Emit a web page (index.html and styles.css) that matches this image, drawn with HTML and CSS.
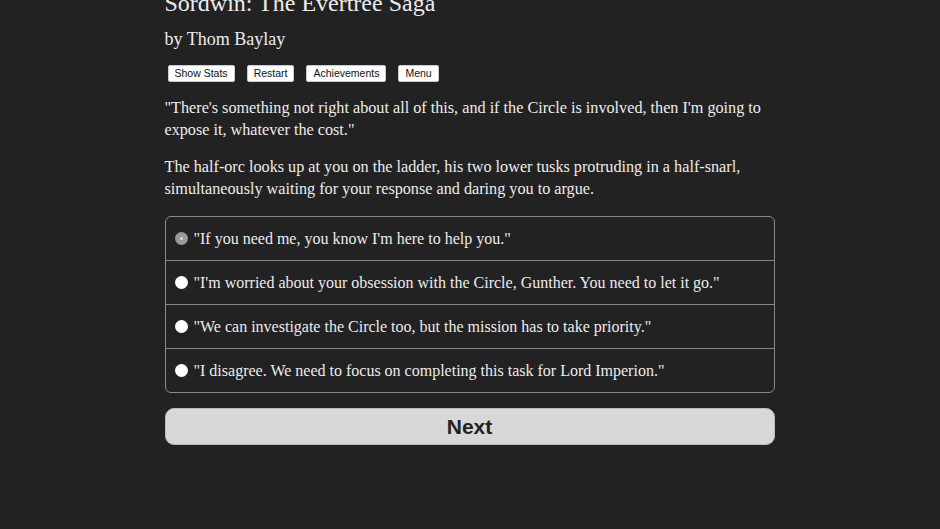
FILE: index.html
```html
<!DOCTYPE html>
<html>
<head>
<meta charset="utf-8">
<link rel="stylesheet" href="styles.css">
</head>
<body>
<div class="page">
  <h1 class="title">Sordwin: The Evertree Saga</h1>
  <h2 class="author">by Thom Baylay</h2>
  <div class="toolbar">
    <button class="tool">Show Stats</button>
    <button class="tool">Restart</button>
    <button class="tool">Achievements</button>
    <button class="tool">Menu</button>
  </div>
  <p class="text">"There's something not right about all of this, and if the Circle is involved, then I'm going to expose it, whatever the cost."</p>
  <p class="text">The half-orc looks up at you on the ladder, his two lower tusks protruding in a half-snarl, simultaneously waiting for your response and daring you to argue.</p>
  <div class="choices">
    <label class="choice"><span class="radio selected"></span><span>"If you need me, you know I'm here to help you."</span></label>
    <label class="choice"><span class="radio"></span><span>"I'm worried about your obsession with the Circle, Gunther. You need to let it go."</span></label>
    <label class="choice"><span class="radio"></span><span>"We can investigate the Circle too, but the mission has to take priority."</span></label>
    <label class="choice"><span class="radio"></span><span>"I disagree. We need to focus on completing this task for Lord Imperion."</span></label>
  </div>
  <button class="next">Next</button>
</div>
</body>
</html>
```
FILE: styles.css
```css
html, body {
  margin: 0;
  padding: 0;
  background: #222222;
  color: #ececec;
  font-family: "Liberation Serif", serif;
}
.page {
  width: 610px;
  margin: 0 auto;
  position: relative;
  left: -0.5px;
}
.title {
  font-size: 24px;
  font-weight: normal;
  margin: -11px 0 0 0;
  line-height: 28px;
}
.author {
  font-size: 18px;
  font-weight: normal;
  margin: 10px 0 0 0;
  line-height: 24px;
}
.toolbar {
  display: flex;
  gap: 12px;
  margin: 14px 0 0 3px;
}
.tool {
  font-family: "Liberation Sans", Arial, sans-serif;
  font-size: 10.5px;
  line-height: 13px;
  padding: 1px 6px;
  background: #fff;
  color: #111;
  border: 1px solid #ccc;
  border-radius: 2px;
}
.text {
  font-size: 16.2px;
  line-height: 22px;
  margin: 15px 0 0 0;
}
.choices {
  margin-top: 16px;
  border: 1px solid #8a8a8a;
  border-radius: 6px;
  display: flex;
  flex-direction: column;
}
.choice {
  display: flex;
  align-items: center;
  gap: 6px;
  height: 43px;
  padding-left: 9px;
  font-size: 16px;
  border-top: 1px solid #8a8a8a;
}
.choice:first-child { border-top: none; }
.radio {
  width: 13px;
  height: 13px;
  border-radius: 50%;
  background: #fff;
  flex: none;
}
.radio.selected {
  background: #9a9a9a;
  position: relative;
}
.radio.selected::after {
  content: "";
  position: absolute;
  left: 5px;
  top: 5px;
  width: 3px;
  height: 3px;
  border-radius: 50%;
  background: #ddd;
}
.next {
  display: block;
  width: 100%;
  margin-top: 15px;
  height: 37px;
  background: #d8d8d8;
  border: 1px solid #bbb;
  border-radius: 9px;
  font-family: "Liberation Sans", Arial, sans-serif;
  font-weight: bold;
  font-size: 21px;
  color: #222;
}
```
